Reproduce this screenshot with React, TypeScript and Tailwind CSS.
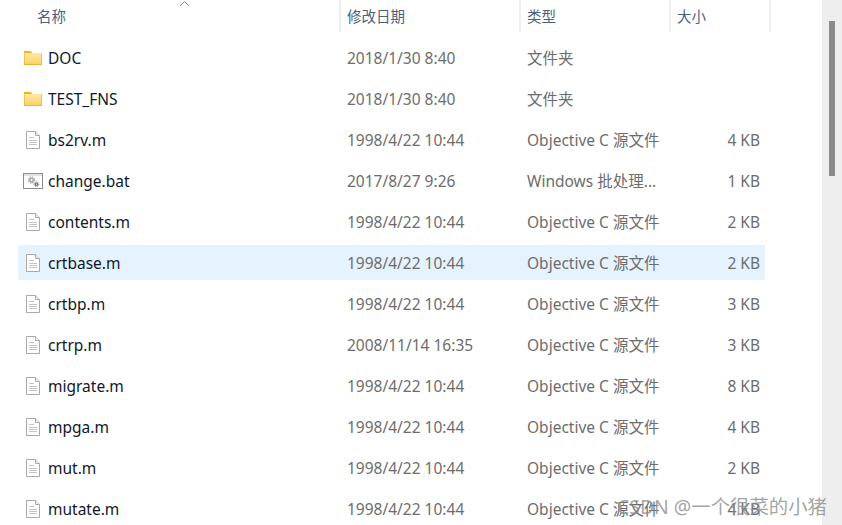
import React from "react";

interface FileRow {
  name: string;
  date: string;
  type: string;
  size?: string;
  icon: "folder" | "doc" | "bat";
  selected?: boolean;
}

const files: FileRow[] = [
  { name: "DOC", date: "2018/1/30 8:40", type: "文件夹", icon: "folder" },
  { name: "TEST_FNS", date: "2018/1/30 8:40", type: "文件夹", icon: "folder" },
  { name: "bs2rv.m", date: "1998/4/22 10:44", type: "Objective C 源文件", size: "4 KB", icon: "doc" },
  { name: "change.bat", date: "2017/8/27 9:26", type: "Windows 批处理...", size: "1 KB", icon: "bat" },
  { name: "contents.m", date: "1998/4/22 10:44", type: "Objective C 源文件", size: "2 KB", icon: "doc" },
  { name: "crtbase.m", date: "1998/4/22 10:44", type: "Objective C 源文件", size: "2 KB", icon: "doc", selected: true },
  { name: "crtbp.m", date: "1998/4/22 10:44", type: "Objective C 源文件", size: "3 KB", icon: "doc" },
  { name: "crtrp.m", date: "2008/11/14 16:35", type: "Objective C 源文件", size: "3 KB", icon: "doc" },
  { name: "migrate.m", date: "1998/4/22 10:44", type: "Objective C 源文件", size: "8 KB", icon: "doc" },
  { name: "mpga.m", date: "1998/4/22 10:44", type: "Objective C 源文件", size: "4 KB", icon: "doc" },
  { name: "mut.m", date: "1998/4/22 10:44", type: "Objective C 源文件", size: "2 KB", icon: "doc" },
  { name: "mutate.m", date: "1998/4/22 10:44", type: "Objective C 源文件", size: "4 KB", icon: "doc" },
];

const FolderIcon = () => (
  <svg width="20" height="16" viewBox="0 0 20 16">
    <defs>
      <linearGradient id="folderBody" x1="0" y1="0" x2="0" y2="1">
        <stop offset="0" stopColor="#fde9a8" />
        <stop offset="1" stopColor="#fbd05c" />
      </linearGradient>
    </defs>
    <path d="M1 1h6.5l2 2H1z" fill="#f4b41c" />
    <rect x="1" y="3" width="18" height="12" fill="url(#folderBody)" />
    <rect x="1" y="14.2" width="18" height="0.8" fill="#ecb02a" />
    <rect x="18.4" y="3" width="0.6" height="12" fill="#ecb02a" />
    <rect x="1" y="3" width="0.6" height="12" fill="#ecb02a" />
  </svg>
);

const DocIcon = () => (
  <svg width="20" height="20" viewBox="0 0 20 20">
    <path d="M3.5 1.5h9l4 4v13h-13z" fill="#fff" stroke="#a9a9a9" />
    <path d="M12.5 1.5v4h4" fill="#f0f0f0" stroke="#a9a9a9" />
    <path d="M6 7.5h5M6 10.5h8M6 12.5h8M6 14.5h8" stroke="#c4c4c4" />
  </svg>
);

const BatIcon = () => (
  <svg width="20" height="20" viewBox="0 0 20 20">
    <rect x="0.5" y="2.5" width="19" height="15" fill="#fff" stroke="#8c8c8c" />
    <rect x="1" y="3" width="18" height="2" fill="#e3e3e3" />
    <circle cx="8.5" cy="9" r="1.8" fill="none" stroke="#a8a8a8" strokeWidth="1.6" />
    <circle cx="8.5" cy="9" r="3.2" fill="none" stroke="#a8a8a8" strokeWidth="1.2" strokeDasharray="1.4 1.1" />
    <circle cx="13.5" cy="13.2" r="1.2" fill="none" stroke="#6a6a6a" strokeWidth="1.2" />
    <circle cx="13.5" cy="13.2" r="2.3" fill="none" stroke="#6a6a6a" strokeWidth="0.9" strokeDasharray="1 0.8" />
  </svg>
);

const icons = { folder: <FolderIcon />, doc: <DocIcon />, bat: <BatIcon /> };

const App: React.FC = () => {
  return (
    <div className="relative flex h-[525px] w-[842px] overflow-hidden bg-white font-['Noto_Sans','Noto_Sans_CJK_SC',sans-serif] text-[15.5px]">
      <div className="flex-1">
        <div className="relative flex h-[32px] text-[14.5px] text-[#4c607a]">
          <div className="w-[341px] border-r-2 border-[#f0f0f0] pl-[37px] leading-[32px]">名称</div>
          <div className="w-[180px] border-r-2 border-[#f0f0f0] pl-[6px] leading-[32px]">修改日期</div>
          <div className="w-[150px] border-r-2 border-[#f0f0f0] pl-[6px] leading-[32px]">类型</div>
          <div className="w-[100px] border-r-2 border-[#f0f0f0] pl-[6px] leading-[32px]">大小</div>
          <svg className="absolute left-[179px] top-0" width="11" height="7" viewBox="0 0 11 7">
            <path d="M1 6l4.5-4.5L10 6" fill="none" stroke="#8a8a8a" />
          </svg>
        </div>
        <div className="ml-[18px] mt-[8px] flex w-[747px] flex-col gap-[6px]">
          {files.map((file) => (
            <div
              key={file.name}
              className={`flex h-[35px] shrink-0 items-center ${file.selected ? "bg-[#e5f3ff]" : ""}`}
            >
              <div className="flex w-[329px] items-center pl-[5px]">
                <span className="flex w-[25px] justify-start">{icons[file.icon]}</span>
                <span className="pt-[2px] text-[#10182c]">{file.name}</span>
              </div>
              <div className="w-[180px] pt-[2px] text-[#6d6d6d]">{file.date}</div>
              <div className="w-[150px] pt-[2px] text-[#6d6d6d]">{file.type}</div>
              <div className="flex-1 pr-[5px] pt-[2px] text-right text-[#6d6d6d]">{file.size}</div>
            </div>
          ))}
        </div>
      </div>
      <div className="flex w-[20px] shrink-0 justify-center bg-[#eeeeee] pt-[21px]">
        <div className="h-[155px] w-[6px] bg-[#8a8a8a]" />
      </div>
      <div className="absolute left-[617px] top-[492px] text-[19.4px] text-[#8c8c8c]/80">CSDN @一个很菜的小猪</div>
    </div>
  );
};

export default App;
